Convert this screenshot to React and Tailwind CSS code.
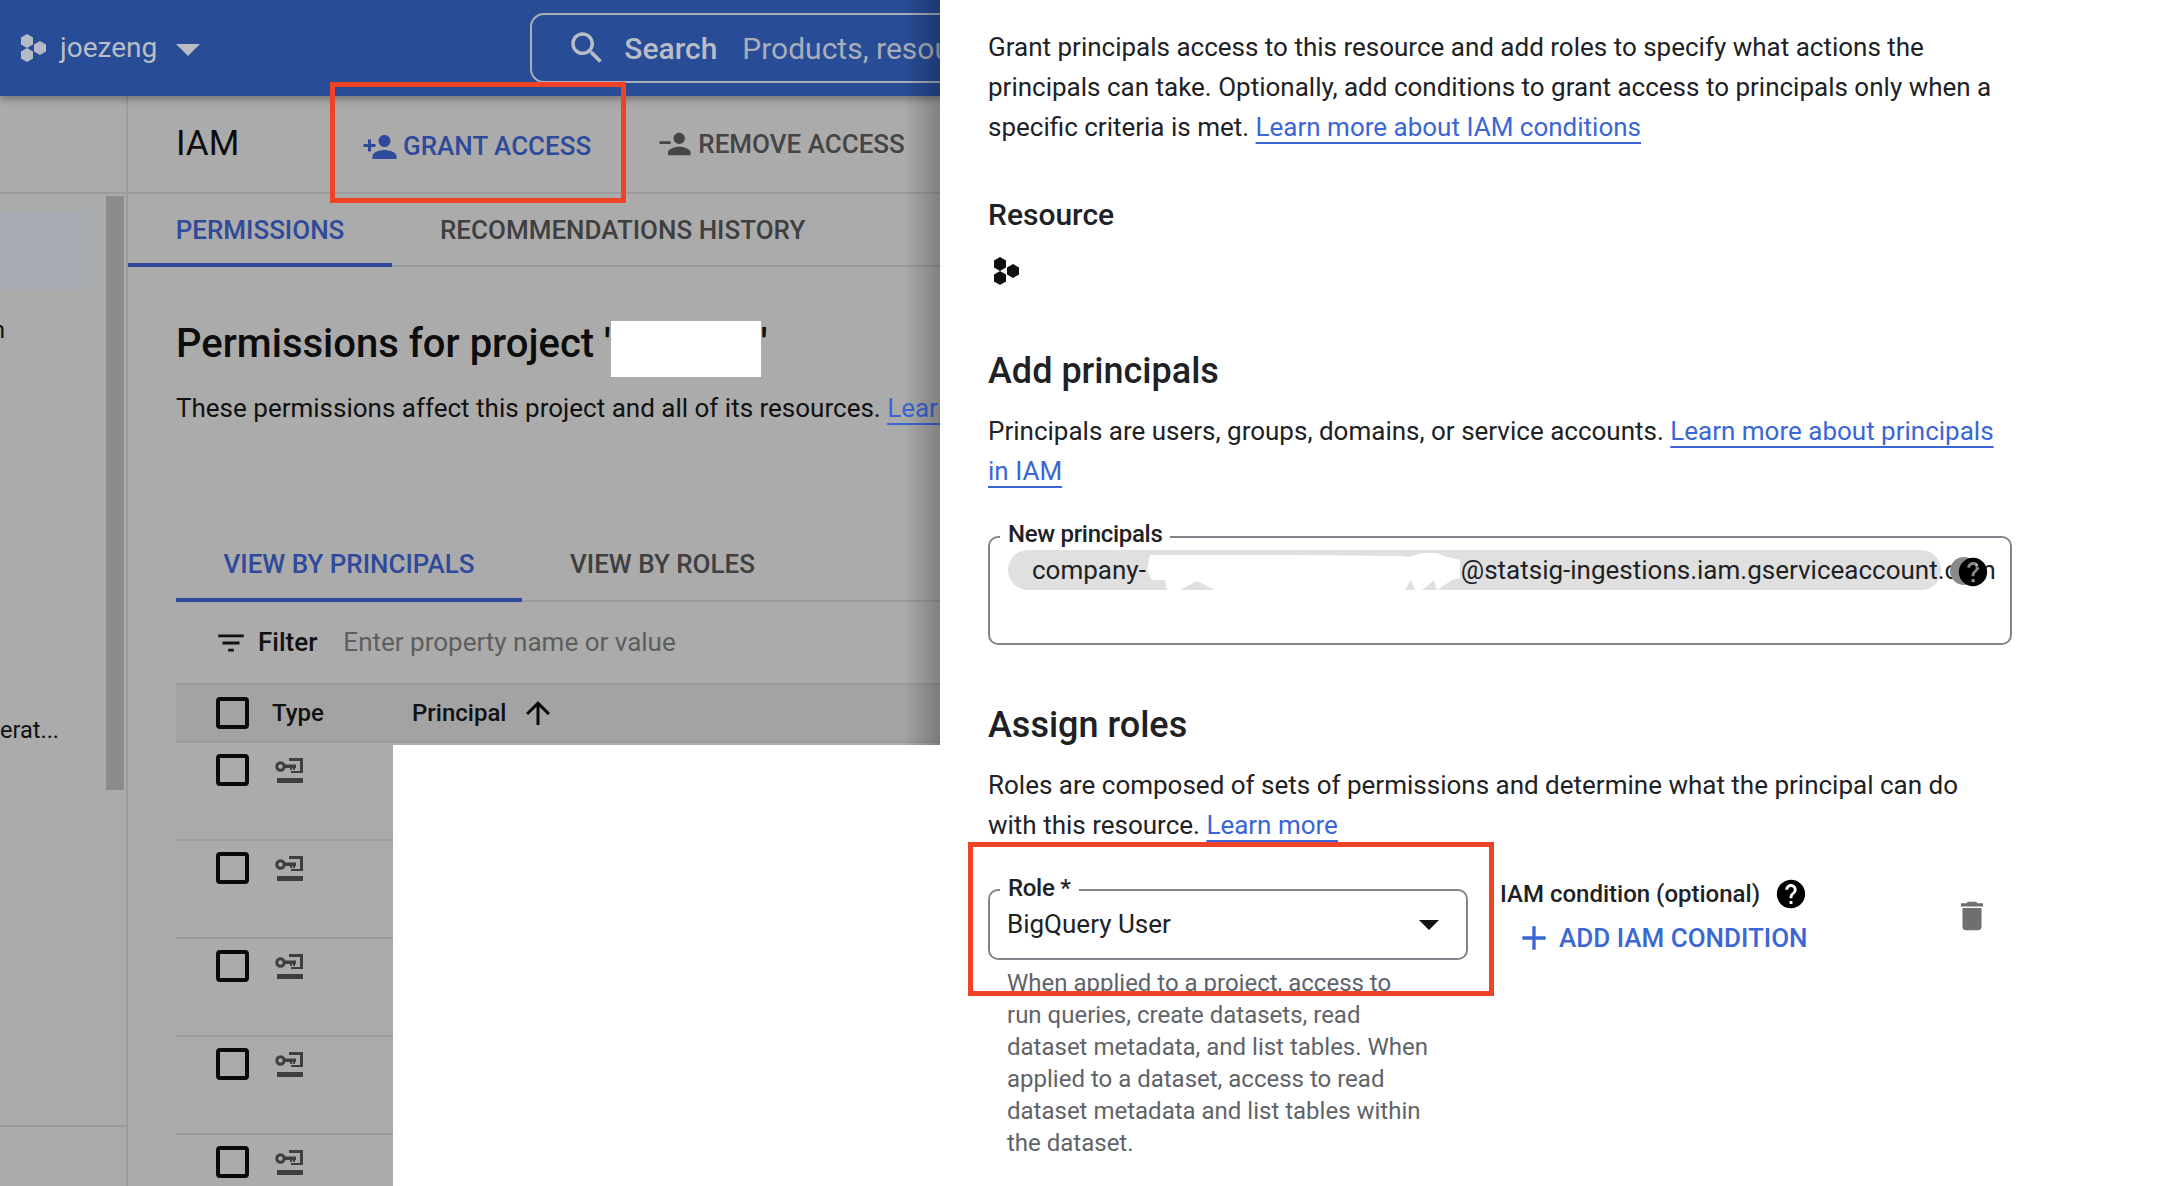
import React from 'react';

const ROW_COUNT = 5;

const ROLE_HELP = [
  'When applied to a project, access to',
  'run queries, create datasets, read',
  'dataset metadata, and list tables. When',
  'applied to a dataset, access to read',
  'dataset metadata and list tables within',
  'the dataset.',
];

const Icon = ({ d, className }) => (
  <svg viewBox="0 0 24 24" fill="currentColor" className={className}>
    <path d={d} />
  </svg>
);

const paths = {
  search: 'M15.5 14h-.79l-.28-.27C15.41 12.59 16 11.11 16 9.5 16 5.91 13.09 3 9.5 3S3 5.91 3 9.5 5.91 16 9.5 16c1.61 0 3.09-.59 4.23-1.57l.27.28v.79l5 4.99L20.49 19l-4.99-5zm-6 0C7.01 14 5 11.99 5 9.5S7.01 5 9.5 5 14 7.01 14 9.5 11.99 14 9.5 14z',
  personAdd: 'M15 12c2.21 0 4-1.79 4-4s-1.79-4-4-4-4 1.79-4 4 1.79 4 4 4zm-9-2V7H4v3H1v2h3v3h2v-3h3v-2H6zm9 4c-2.67 0-8 1.34-8 4v2h16v-2c0-2.66-5.33-4-8-4z',
  personRemove: 'M15 12c2.21 0 4-1.79 4-4s-1.79-4-4-4-4 1.79-4 4 1.79 4 4 4zM1 10v2h8v-2H1zm14 4c-2.67 0-8 1.34-8 4v2h16v-2c0-2.66-5.33-4-8-4z',
  filter: 'M10 18h4v-2h-4v2zM3 6v2h18V6H3zm3 7h12v-2H6v2z',
  arrowUp: 'M4 12l1.41 1.41L11 7.83V20h2V7.83l5.58 5.59L20 12l-8-8-8 8z',
  help: 'M12 2C6.48 2 2 6.48 2 12s4.48 10 10 10 10-4.48 10-10S17.52 2 12 2zm1 17h-2v-2h2v2zm2.07-7.75l-.9.92C13.45 12.9 13 13.5 13 15h-2v-.5c0-1.1.45-2.1 1.17-2.83l1.24-1.26c.37-.36.59-.86.59-1.41 0-1.1-.9-2-2-2s-2 .9-2 2H8c0-2.21 1.79-4 4-4s4 1.79 4 4c0 .88-.36 1.68-.93 2.25z',
  trash: 'M6 19c0 1.1.9 2 2 2h8c1.1 0 2-.9 2-2V7H6v12zM19 4h-3.5l-1-1h-5l-1 1H5v2h14V4z',
  add: 'M19 13h-6v6h-2v-6H5v-2h6V5h2v6h6v2z',
};

const ProjectLogo = ({ className }) => (
  <svg viewBox="0 0 27 28" fill="currentColor" className={className}>
    <polygon points="7,0 13,3.5 13,10.5 7,14 1,10.5 1,3.5" />
    <polygon points="20,7 26,10.5 26,17.5 20,21 14,17.5 14,10.5" />
    <polygon points="7,14 13,17.5 13,24.5 7,28 1,24.5 1,17.5" />
  </svg>
);

// service account key, drawn to match the table's type column
const ServiceKey = () => (
  <svg viewBox="0 0 28 25" fill="none" className="w-[28px] h-[25px] text-[#3e3e3e]">
    <circle cx="5.5" cy="8.5" r="3.7" stroke="currentColor" strokeWidth="3" />
    <path d="M10 6.5h11v3.5h-1v2h-2v-2h-1v2h-2v-2h-5z" fill="currentColor" />
    <path d="M14 0h14v15H16v-2h9V3H14z" fill="currentColor" />
    <rect x="2" y="20" width="26" height="5" fill="currentColor" />
  </svg>
);

const Checkbox = () => <div className="w-[33px] h-[32px] border-[4px] border-[#0a0a0a] rounded-[4px] shrink-0" />;

const FieldLabel = ({ children, className }) => (
  <span className={`absolute left-[10px] bg-white px-[8px] text-[24px] leading-[28px] font-medium text-[#202124] tracking-[-0.3px] ${className}`}>
    {children}
  </span>
);

const DocLink = ({ children }) => (
  <a className="text-[#3a66d6] underline decoration-2 underline-offset-[6px] [text-decoration-skip-ink:none]">{children}</a>
);

const LeftPanel = () => (
  <div className="relative w-[940px] h-full flex flex-col bg-[#ababab] overflow-hidden shrink-0">
    <header className="h-[96px] shrink-0 bg-[#284c96] flex items-center pl-[20px] shadow-[0_3px_8px_rgba(0,0,0,0.35)] z-10">
      <ProjectLogo className="w-[27px] h-[28px] shrink-0 text-[#b5bbc6]" />
      <span className="ml-[13px] shrink-0 text-[28px] text-[#b9bdc6]">joezeng</span>
      <span className="ml-[19px] mt-[4px] shrink-0 w-0 h-0 border-x-[12px] border-x-transparent border-t-[12px] border-t-[#b9bdc6]" />
      <div className="ml-[330px] h-[70px] w-[560px] shrink-0 border-2 border-[#a9aeba] border-r-0 rounded-l-[14px] flex items-center pl-[34px]">
        <Icon d={paths.search} className="w-[42px] h-[42px] shrink-0 text-[#b9bdc6]" />
        <span className="ml-[16px] text-[30px] font-medium text-[#b9bdc6]">Search</span>
        <span className="ml-[25px] text-[30px] text-[#a9aeba] whitespace-nowrap">Products, resources</span>
      </div>
    </header>
    <div className="flex-1 flex min-h-0">
      <aside className="w-[128px] shrink-0 border-r-2 border-[#9c9c9c] flex flex-col">
        <div className="h-[98px] shrink-0 border-b-2 border-[#9c9c9c]" />
        <div className="h-[933px] border-b-2 border-[#9c9c9c] flex">
          <div className="w-[106px] shrink-0 overflow-hidden text-[23.5px] text-[#111]">
            <div className="mt-[16px] w-[94px] h-[80px] bg-[#a8abb1]" />
            <div className="mt-[25px] h-[30px] leading-[30px] -ml-[8px]">n</div>
            <div className="mt-[370px] leading-[30px]">erat...</div>
          </div>
          <div className="mt-[2px] w-[18px] h-[594px] bg-[#8c8c8c]" />
        </div>
      </aside>
      <main className="flex-1 min-w-0 flex flex-col">
        <div className="h-[98px] shrink-0 border-b-2 border-[#9c9c9c] flex items-center pl-[48px]">
          <h1 className="text-[35px] text-[#0d0d0d] w-[188px]">IAM</h1>
          <div className="mt-[5px] flex items-center text-[#2f4a9b]">
            <Icon d={paths.personAdd} className="w-[36px] h-[36px] -ml-[2px]" />
            <span className="ml-[5px] text-[26px] font-medium whitespace-nowrap">GRANT ACCESS</span>
          </div>
          <div className="ml-[67px] flex items-center text-[#454545]">
            <Icon d={paths.personRemove} className="w-[34px] h-[34px]" />
            <span className="ml-[6px] text-[26px] font-medium whitespace-nowrap">REMOVE ACCESS</span>
          </div>
        </div>
        <div className="h-[73px] shrink-0 border-b-2 border-[#9c9c9c] flex">
          <div className="w-[264px] flex justify-center pt-[17px] border-b-[4px] border-[#2f4a9b] -mb-[2px] text-[26px] font-medium text-[#2f4a9b]">
            PERMISSIONS
          </div>
          <div className="ml-[48px] pt-[17px] text-[26px] font-medium text-[#3f3f3f] whitespace-nowrap">RECOMMENDATIONS HISTORY</div>
        </div>
        <div className="flex-1 pl-[48px]">
          <h2 className="mt-[49px] h-[56px] leading-[56px] text-[40px] font-medium text-[#0d0d0d] whitespace-nowrap">
            Permissions for project '<span className="inline-block w-[150px]" />'
          </h2>
          <p className="mt-[16px] leading-[40px] text-[26px] text-[#111] whitespace-nowrap">
            These permissions affect this project and all of its resources. <DocLink>Learn more</DocLink>
          </p>
          <div className="mt-[102px] h-[72px] border-b-[2px] border-[#9c9c9c] flex">
            <div className="w-[346px] border-b-[4px] border-[#2f4a9b] -mb-[2px] pt-[15px] flex justify-center text-[26px] font-medium text-[#2f4a9b]">
              VIEW BY PRINCIPALS
            </div>
            <div className="ml-[48px] pt-[15px] text-[26px] font-medium text-[#3f3f3f]">VIEW BY ROLES</div>
          </div>
          <div className="h-[81px] flex items-center pl-[38px]">
            <Icon d={paths.filter} className="w-[34px] h-[34px] text-[#111]" />
            <span className="ml-[10px] text-[26px] font-medium text-[#111]">Filter</span>
            <span className="ml-[26px] text-[26px] text-[#5e5e5e] whitespace-nowrap">Enter property name or value</span>
          </div>
          <div className="h-[60px] bg-[#a3a3a3] border-y-2 border-[#9a9a9a] flex items-center pl-[40px]">
            <Checkbox />
            <span className="ml-[23px] w-[140px] text-[24px] font-medium text-[#111]">Type</span>
            <span className="text-[24px] font-medium text-[#111]">Principal</span>
            <Icon d={paths.arrowUp} className="ml-[14px] w-[36px] h-[36px] text-[#0a0a0a]" />
          </div>
          {Array.from({ length: ROW_COUNT }).map((_, i) => (
            <div key={i} className="h-[98px] border-b-2 border-[#9c9c9c] flex items-start pl-[40px] pt-[11px]">
              <Checkbox />
              <div className="ml-[26px] mt-[4px]">
                <ServiceKey />
              </div>
            </div>
          ))}
        </div>
      </main>
    </div>
    <div className="absolute right-0 top-0 bottom-0 w-[36px] bg-gradient-to-r from-transparent to-black/25 z-10" />
    {/* redactions and annotation on top of the dimmed page */}
    <div className="absolute left-[393px] top-[745px] right-0 bottom-0 bg-white z-20" />
    <div className="absolute left-[611px] top-[321px] w-[150px] h-[56px] bg-white z-20" />
    <div className="absolute left-[330px] top-[82px] w-[296px] h-[121px] border-[5px] border-[#ee4327] z-20" />
  </div>
);

const RightPanel = () => (
  <div className="relative flex-1 h-full bg-white pl-[48px] pt-[27px] text-[#202124] overflow-hidden">
    <p className="w-[1030px] text-[26px] leading-[40px]">
      Grant principals access to this resource and add roles to specify what actions the principals can take. Optionally, add conditions to grant access to principals only when a specific criteria is met.{' '}
      <DocLink>Learn more about IAM conditions</DocLink>
    </p>
    <h3 className="mt-[48px] text-[30px] leading-[40px] font-medium">Resource</h3>
    <div className="mt-[22px] ml-[5px] h-[28px]">
      <ProjectLogo className="w-[27px] h-[28px] text-[#111]" />
    </div>
    <h2 className="mt-[60px] text-[36px] leading-[52px] font-medium">Add principals</h2>
    <p className="mt-[14px] w-[1030px] text-[26px] leading-[40px]">
      Principals are users, groups, domains, or service accounts.{' '}
      <DocLink>Learn more about principals in IAM</DocLink>
    </p>
    <div className="relative mt-[45px] w-[1024px] h-[109px] border-2 border-[#80868b] rounded-[10px]">
      <FieldLabel className="-top-[18px]">New principals</FieldLabel>
      <div className="absolute left-[18px] top-[12px] w-[933px] h-[40px] rounded-[20px] bg-[#e0e0e0] pl-[24px] flex items-center text-[26px] whitespace-nowrap">
        company-<span className="inline-block w-[315px] shrink-0" />@statsig-ingestions.iam.gserviceaccount.com
      </div>
      <svg viewBox="0 0 313 40" className="absolute left-[157px] top-[12px] w-[313px] h-[40px]">
        <path d="M3 5L150 5L250 6L262 7L275 3L290 3L300 7L313 10V28L305 30L290 40L287 30L275 40L268 40L264 30L258 40L68 40L50 31L33 40L20 40L18 30L5 30L0 20z" fill="#fff" />
      </svg>
      <div className="absolute left-[960px] top-[19px] w-[28px] h-[28px] rounded-full bg-[#8a8a8a]" />
      <Icon d={paths.help} className="absolute left-[966px] top-[17px] w-[34px] h-[34px] text-black" />
    </div>
    <h2 className="mt-[54px] text-[36px] leading-[52px] font-medium">Assign roles</h2>
    <p className="mt-[14px] w-[1000px] text-[26px] leading-[40px]">
      Roles are composed of sets of permissions and determine what the principal can do with this resource.{' '}
      <DocLink>Learn more</DocLink>
    </p>
    <div className="mt-[44px] flex items-start">
      <div className="w-[480px] shrink-0">
        <div className="relative h-[71px] border-2 border-[#80868b] rounded-[10px] flex items-center pl-[17px] pr-[27px]">
          <FieldLabel className="-top-[17px]">Role *</FieldLabel>
          <span className="flex-1 text-[26px]">BigQuery User</span>
          <span className="w-0 h-0 border-x-[10px] border-x-transparent border-t-[10px] border-t-[#111]" />
        </div>
        <div className="mt-[7px] pl-[19px] text-[24px] leading-[32px] text-[#5f6368]">
          {ROLE_HELP.map((line) => (
            <p key={line} className="whitespace-nowrap">{line}</p>
          ))}
        </div>
      </div>
      <div className="ml-[32px] w-[330px] shrink-0 -mt-[11px]">
        <div className="flex items-center h-[32px]">
          <span className="text-[24px] font-medium whitespace-nowrap">IAM condition (optional)</span>
          <Icon d={paths.help} className="ml-[14px] w-[34px] h-[34px] text-black" />
        </div>
        <div className="mt-[8px] flex items-center text-[#3a66d6]">
          <Icon d={paths.add} className="ml-[14px] w-[40px] h-[40px]" />
          <span className="ml-[5px] text-[26px] font-medium whitespace-nowrap">ADD IAM CONDITION</span>
        </div>
      </div>
      <Icon d={paths.trash} className="ml-[123px] mt-[8px] w-[38px] h-[38px] text-[#6f6f6f]" />
    </div>
    <div className="absolute left-[28px] top-[842px] w-[526px] h-[154px] border-[5px] border-[#ee4327]" />
  </div>
);

export default function App() {
  return (
    <div className="w-[2178px] h-[1186px] flex overflow-hidden bg-white font-['Roboto',sans-serif]">
      <LeftPanel />
      <RightPanel />
    </div>
  );
}
